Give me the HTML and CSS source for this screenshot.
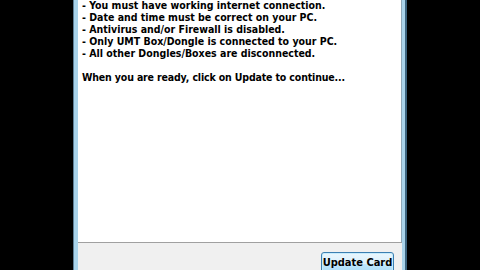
FILE: index.html
```html
<!DOCTYPE html>
<html lang="en">

<head>
    <meta charset="UTF-8">
    <meta name="viewport" content="width=device-width, initial-scale=1.0">
    <title>UMT Update</title>
    <link rel="stylesheet" href="styles.css">
</head>

<body>

    <div class="window">
        <div class="content">
            <p class="notes">
                - You must have working internet connection.<br>
                - Date and time must be correct on your PC.<br>
                - Antivirus and/or Firewall is disabled.<br>
                - Only UMT Box/Dongle is connected to your PC.<br>
                - All other Dongles/Boxes are disconnected.
            </p>
            <p class="ready">When you are ready, click on Update to continue...</p>
        </div>
        <!-- ---------------- -->
        <div class="footer">
            <button type="button" class="update-btn">Update Card</button>
        </div>
    </div>

</body>

</html>
```

FILE: styles.css
```css
* {
    margin: 0;
    padding: 0;
    box-sizing: border-box;
}

body {
    background-color: #000;
    height: 100vh;
    overflow: hidden;
    font-family: "DejaVu Sans Condensed", "DejaVu Sans", sans-serif;
    font-weight: bold;
    font-size: 10.5px;
    color: #000;
}

.window {
    width: 334px;
    height: 100vh;
    margin-left: 73px;
    display: flex;
    flex-direction: column;
    background-color: #a9d3ea;
    border-left: 1px solid #5f7f96;
    border-right: 2px solid #3d6580;
    padding: 0 3px 0 4px;
}

.content {
    flex: 1;
    background-color: #fff;
    padding-left: 4px;
    border-right: 1px solid #8fa9ba;
}

.notes {
    line-height: 12px;
    margin-top: -1px;
}

.ready {
    line-height: 12px;
    margin-top: 12px;
    letter-spacing: -0.15px;
}

.footer {
    height: 28px;
    background-color: #f0f0f0;
    border-top: 1px solid #a0a0a0;
    display: flex;
    justify-content: flex-end;
    align-items: flex-start;
    padding: 9px 8px 0 0;
}

.update-btn {
    width: 73px;
    height: 24px;
    font-family: inherit;
    font-weight: bold;
    font-size: 11px;
    color: #000;
    border: 1px solid #3c7fb1;
    border-radius: 3px;
    background: linear-gradient(#eaf6fd, #d9f0fc 50%, #bee6fd 51%, #a7d9f5);
    box-shadow: inset 0 0 0 1px #c6ecfd;
    padding-bottom: 4px;
}
```
